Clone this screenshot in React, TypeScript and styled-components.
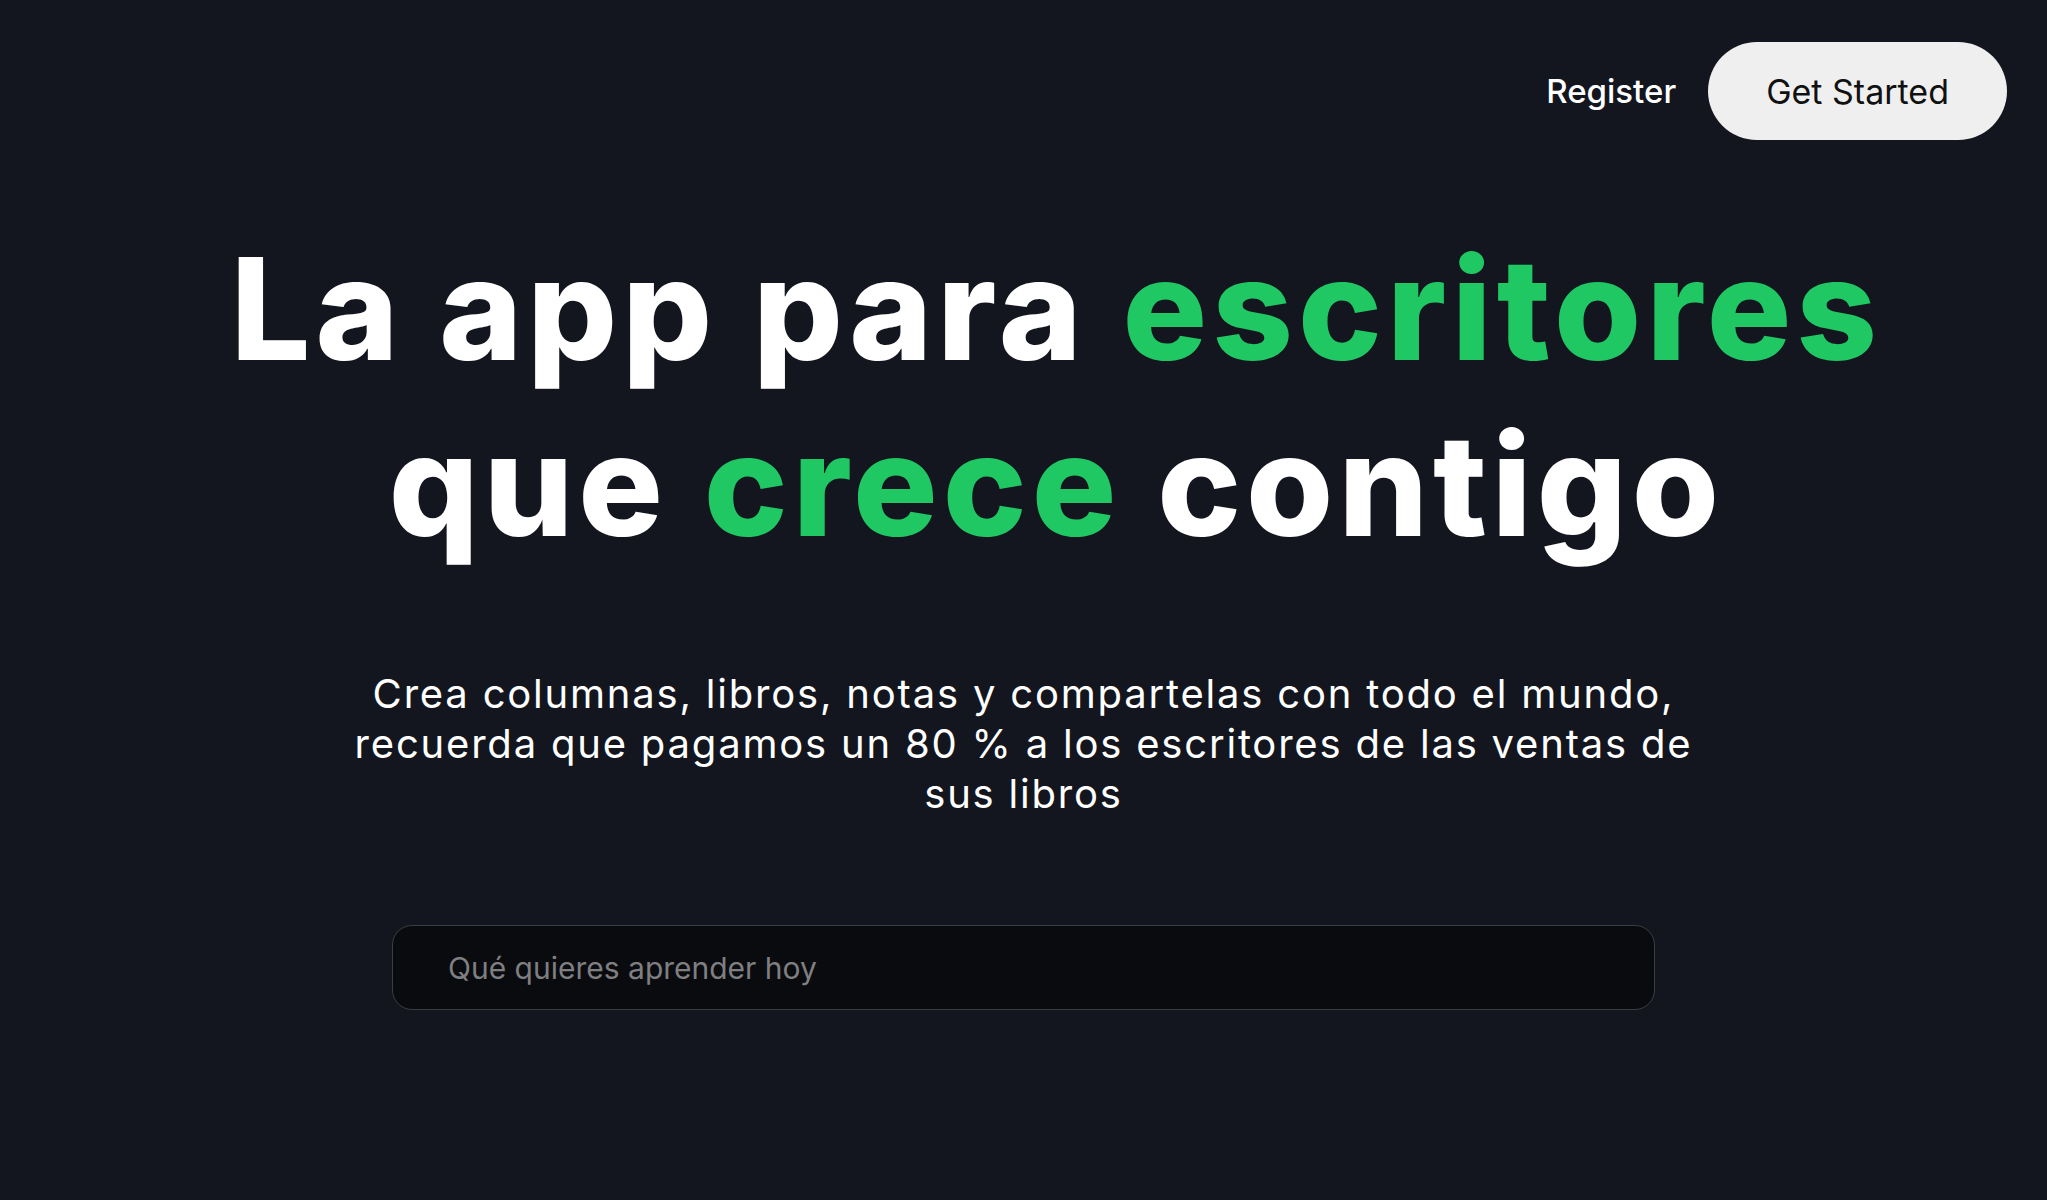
import styled, { createGlobalStyle } from 'styled-components'

const GlobalStyle = createGlobalStyle`
  * {
    box-sizing: border-box;
  }
  body {
    margin: 0;
    background-color: #13161e;
    font-family: Inter, "Noto Sans", sans-serif;
  }
`

const Page = styled.div`
  min-height: 100vh;
  padding: 42px 40px 0;
  background-color: #13161e;
`

const Nav = styled.nav`
  display: flex;
  justify-content: flex-end;
  align-items: center;
  gap: 32px;
`

const NavLink = styled.a`
  color: #ffffff;
  font-size: 33px;
  font-weight: 500;
  text-decoration: none;
  cursor: pointer;
`

const PrimaryButton = styled.button`
  height: 98px;
  padding: 0 58px;
  border: none;
  border-radius: 999px;
  background-color: #efefef;
  color: #111111;
  font-family: Inter, "Noto Sans", sans-serif;
  font-size: 34px;
  font-weight: 400;
  cursor: pointer;
`

const Hero = styled.main`
  display: flex;
  flex-direction: column;
  align-items: center;
`

const Headline = styled.h1`
  margin: 81px 0 0;
  padding-left: 66px;
  color: #ffffff;
  font-size: 141px;
  font-weight: 800;
  line-height: 176px;
  letter-spacing: 5px;
  text-align: center;
`

const Accent = styled.span`
  color: #20c864;
`

const Subtitle = styled.p`
  max-width: 1345px;
  margin: 96px 0 0;
  color: #ffffff;
  font-size: 40px;
  font-weight: 400;
  line-height: 50px;
  letter-spacing: 1.8px;
  text-align: center;
`

const SearchBox = styled.input`
  width: 1263px;
  height: 85px;
  margin-top: 106px;
  padding: 0 55px;
  border: 1px solid #3b3e45;
  border-radius: 20px;
  background-color: #0a0b0f;
  color: #ffffff;
  font-family: Inter, "Noto Sans", sans-serif;
  font-size: 30px;
  outline: none;

  &::placeholder {
    color: #7f7f82;
  }
`

export default function App() {
  return (
    <>
      <GlobalStyle />
      <Page>
        <Nav>
          <NavLink>Register</NavLink>
          <PrimaryButton>Get Started</PrimaryButton>
        </Nav>
        <Hero>
          <Headline>
            La app para <Accent>escritores</Accent>
            <br />
            que <Accent>crece</Accent> contigo
          </Headline>
          <Subtitle>
            Crea columnas, libros, notas y compartelas con todo el mundo,
            recuerda que pagamos un 80 % a los escritores de las ventas de sus
            libros
          </Subtitle>
          <SearchBox placeholder="Qué quieres aprender hoy" />
        </Hero>
      </Page>
    </>
  )
}
